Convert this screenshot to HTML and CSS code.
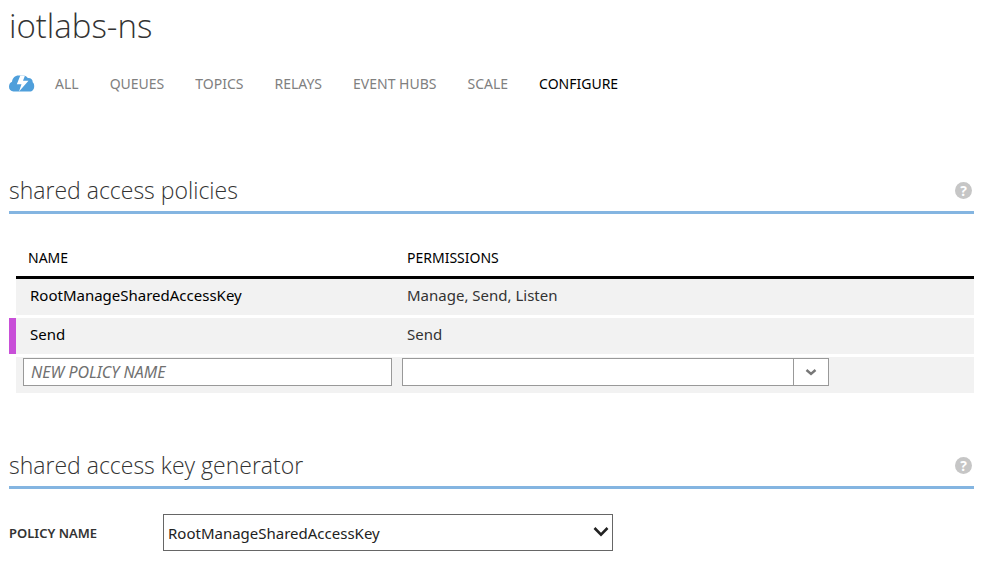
FILE: index.html
```html
<!DOCTYPE html>
<html lang="en">
<head>
<meta charset="utf-8">
<meta name="viewport" content="width=device-width, initial-scale=1">
<title>iotlabs-ns</title>
<link rel="stylesheet" href="styles.css">
</head>
<body>
<header>
  <h1 class="page-title">iotlabs-ns</h1>
  <nav class="tabs" aria-label="Namespace">
    <a class="tabs-home" href="#" aria-label="Quick start">
      <svg width="26" height="18" viewBox="0 0 26 18" aria-hidden="true">
        <path fill="#4f9fdb" d="M4.500 16.500C1.800 16.500 0 14.500 0 11.800c0-2.500 1.200-4.300 3-5C3.400 3 6 .5 9.500.5h5.800c1.500.4 2.700 1.300 3.500 2.600 3.200-.2 5 1.600 4.900 4.200 1 .8 1.500 2.100 1.500 3.900 0 3.200-1.800 5.300-4.500 5.300z"/>
        <path fill="#fff" d="M11.300 .5h4.700l-2 5.200h5.500L10 16.500l2.500-7.300H7.800z"/>
      </svg>
    </a>
    <a href="#">ALL</a>
    <a href="#">QUEUES</a>
    <a href="#">TOPICS</a>
    <a href="#">RELAYS</a>
    <a href="#">EVENT HUBS</a>
    <a href="#">SCALE</a>
    <a class="current" href="#" aria-current="page">CONFIGURE</a>
  </nav>
</header>
<main>
  <section class="section">
    <div class="section-head">
      <h2>shared access policies</h2>
      <button class="help" type="button" aria-label="Help">?</button>
    </div>
    <table class="policies">
      <colgroup><col class="col-mark"><col class="col-name"><col></colgroup>
      <thead>
        <tr><td class="mark"></td><th class="name" scope="col">NAME</th><th scope="col">PERMISSIONS</th></tr>
      </thead>
      <tbody>
        <tr><td class="mark"></td><td class="name">RootManageSharedAccessKey</td><td>Manage, Send, Listen</td></tr>
        <tr class="changed"><td class="mark"></td><td class="name">Send</td><td>Send</td></tr>
        <tr class="entry">
          <td class="mark"></td>
          <td class="name"><input class="field" type="text" placeholder="NEW POLICY NAME" aria-label="New policy name"></td>
          <td>
            <div class="combo">
              <select class="field" aria-label="Permissions"><option></option><option>Manage</option><option>Send</option><option>Listen</option></select>
              <span class="combo-arrow"><svg width="12" height="8" viewBox="0 0 12 8" aria-hidden="true"><path d="M1.500 2L6 6l4.500-4" fill="none" stroke="#777" stroke-width="2.400"/></svg></span>
            </div>
          </td>
        </tr>
      </tbody>
    </table>
  </section>
  <section class="section">
    <div class="section-head">
      <h2>shared access key generator</h2>
      <button class="help" type="button" aria-label="Help">?</button>
    </div>
    <div class="form-row">
      <label for="policy">POLICY NAME</label>
      <div class="picker">
        <select id="policy"><option>RootManageSharedAccessKey</option><option>Send</option></select>
        <svg class="picker-arrow" width="16" height="12" viewBox="0 0 16 12" aria-hidden="true"><path d="M1.500 2L8 8.700 14.500 2" fill="none" stroke="#222" stroke-width="2.600"/></svg>
      </div>
    </div>
  </section>
</main>
</body>
</html>
```
FILE: styles.css
```css
* {
  box-sizing: border-box;
}

body {
  margin: 0;
  padding: 0 21px 0 9px;
  background: #fff;
  color: #333;
  font: 15px/20px "Noto Sans", "Open Sans", sans-serif;
}

h1,
h2 {
  margin: 0;
  color: #333;
  font-family: "Open Sans", sans-serif;
  font-weight: 300;
}

.page-title {
  padding-top: 4px;
  font-size: 33px;
  line-height: 44px;
}

.tabs {
  display: flex;
  align-items: center;
  gap: 31px;
  height: 20px;
  margin-top: 26px;
  font-size: 14px;
}

.tabs a {
  color: #808080;
  text-decoration: none;
  white-space: nowrap;
}

.tabs .tabs-home {
  display: flex;
  margin-right: -11px;
}

.tabs .current {
  color: #000;
}

.section {
  margin-top: 51px;
}

header + main > .section:first-child {
  margin-top: 78px;
}

.section-head {
  display: flex;
  align-items: center;
  justify-content: space-between;
  height: 42px;
  padding: 0 2px 3px 0;
  border-bottom: 3px solid #84b5e1;
}

.section-head h2 {
  font-size: 23px;
  line-height: 36px;
}

.help {
  width: 17px;
  height: 17px;
  padding: 0;
  border: 0;
  border-radius: 50%;
  background: #c6c6c6;
  color: #fff;
  font: 700 14px/17px "Open Sans", sans-serif;
}

.policies {
  width: 100%;
  margin-top: 26px;
  border-spacing: 0;
  table-layout: fixed;
}

.col-mark {
  width: 7px;
}

.col-name {
  width: 379px;
}

.policies th,
.policies td {
  height: 39px;
  padding: 0 0 4px 12px;
  border-bottom: 3px solid #fff;
  background: #f2f2f2;
  text-align: left;
}

.policies .mark {
  padding: 0;
  background: #fff;
}

.policies th,
.policies thead .mark {
  padding-bottom: 0;
  background: #fff;
  font-size: 14px;
  font-weight: 400;
  color: #000;
}

.policies th {
  border-bottom-color: #000;
}

.policies td.name {
  padding-left: 14px;
  color: #000;
}

.policies .changed .mark {
  background: #c84fd8;
}

.policies .entry td {
  padding: 1px 0 0 7px;
  vertical-align: top;
}

.field {
  display: block;
  width: 100%;
  height: 28px;
  padding: 0 7px;
  border: 1px solid #999;
  border-radius: 0;
  background: #fff;
  color: #000;
  font: inherit;
  font-size: 16px;
  appearance: none;
}

.policies .entry .name {
  padding-right: 3px;
}

input.field::placeholder {
  color: #707070;
  font-style: italic;
  opacity: 1;
}

.combo {
  position: relative;
  max-width: 427px;
}

.combo-arrow {
  position: absolute;
  top: 1px;
  right: 1px;
  bottom: 1px;
  display: flex;
  align-items: center;
  justify-content: center;
  width: 35px;
  border-left: 1px solid #999;
  pointer-events: none;
}

.form-row {
  display: flex;
  align-items: center;
  margin-top: 25px;
}

.form-row label {
  width: 154px;
  font-size: 13px;
  font-weight: 600;
}

.picker {
  position: relative;
  flex: 0 1 450px;
}

.picker select {
  display: block;
  width: 100%;
  height: 37px;
  padding: 0 4px;
  border: 1px solid #666;
  border-radius: 0;
  background: #fff;
  color: #222;
  font: inherit;
  appearance: none;
}

.picker-arrow {
  position: absolute;
  top: 12px;
  right: 4px;
  pointer-events: none;
}
```
